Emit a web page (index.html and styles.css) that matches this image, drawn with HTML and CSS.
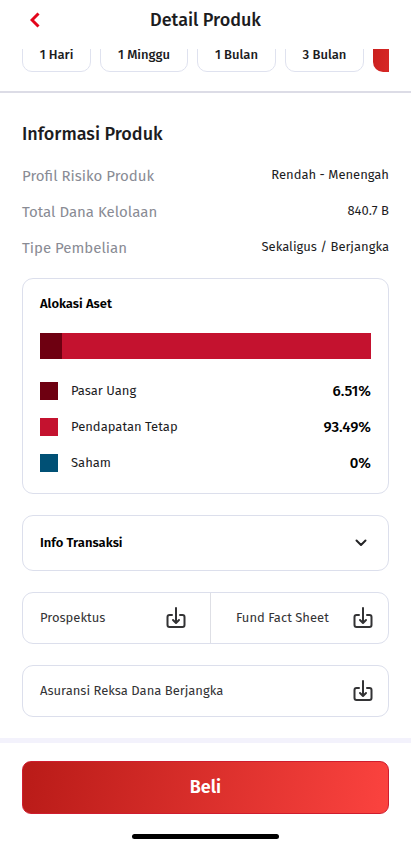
FILE: index.html
```html
<!DOCTYPE html>
<html lang="id">
<head>
<meta charset="utf-8">
<meta name="viewport" content="width=device-width, initial-scale=1">
<title>Detail Produk</title>
<link rel="stylesheet" href="styles.css">
</head>
<body>
<svg class="sprite" aria-hidden="true">
  <symbol id="download" viewBox="0 0 20 22">
    <path d="M6 8H3.500Q1.500 8 1.500 10V18Q1.500 20 3.500 20H16.500Q18.500 20 18.500 18V10Q18.500 8 16.500 8H14M10 1V15.500M7 13L10 16L13 13" fill="none" stroke="currentColor" stroke-width="2" stroke-linecap="round" stroke-linejoin="round"/>
  </symbol>
</svg>
<header class="header">
  <button class="back" type="button" aria-label="Kembali">
    <svg width="10" height="16" viewBox="0 0 10 16"><path d="M8.500 1.500L2 8L8.500 14.500" fill="none" stroke="#e3051b" stroke-width="3"/></svg>
  </button>
  <h1 class="title">Detail Produk</h1>
</header>
<main class="main">
  <div class="periods">
    <button class="chip chip-day" type="button">1 Hari</button>
    <button class="chip chip-week" type="button">1 Minggu</button>
    <button class="chip chip-month" type="button">1 Bulan</button>
    <button class="chip chip-month" type="button">3 Bulan</button>
    <button class="chip chip-active" type="button" aria-label="Periode terpilih"></button>
  </div>
  <section class="info">
    <h2 class="section-title">Informasi Produk</h2>
    <dl class="facts">
      <div class="fact"><dt>Profil Risiko Produk</dt><dd>Rendah - Menengah</dd></div>
      <div class="fact"><dt>Total Dana Kelolaan</dt><dd>840.7 B</dd></div>
      <div class="fact"><dt>Tipe Pembelian</dt><dd>Sekaligus / Berjangka</dd></div>
    </dl>
    <section class="card allocation">
      <h3 class="card-title">Alokasi Aset</h3>
      <div class="bar"><span class="cash" style="width:6.51%"></span><span class="bonds" style="width:93.49%"></span></div>
      <dl class="legend">
        <div class="legend-row"><dt><span class="swatch cash"></span>Pasar Uang</dt><dd>6.51%</dd></div>
        <div class="legend-row"><dt><span class="swatch bonds"></span>Pendapatan Tetap</dt><dd>93.49%</dd></div>
        <div class="legend-row"><dt><span class="swatch stocks"></span>Saham</dt><dd>0%</dd></div>
      </dl>
    </section>
    <button class="card accordion" type="button" aria-expanded="false">Info Transaksi
      <svg width="12" height="8" viewBox="0 0 12 8"><path d="M1.500 1.500L6 6L10.500 1.500" fill="none" stroke="#242426" stroke-width="2" stroke-linecap="round" stroke-linejoin="round"/></svg>
    </button>
    <div class="card documents pair">
      <a class="document" href="#prospektus">Prospektus<svg class="icon"><use href="#download"/></svg></a>
      <a class="document" href="#fund-fact-sheet">Fund Fact Sheet<svg class="icon"><use href="#download"/></svg></a>
    </div>
    <div class="card documents">
      <a class="document" href="#asuransi">Asuransi Reksa Dana Berjangka<svg class="icon"><use href="#download"/></svg></a>
    </div>
  </section>
</main>
<footer class="footer">
  <button class="buy" type="button">Beli</button>
  <div class="home-indicator"></div>
</footer>
</body>
</html>
```
FILE: styles.css
```css
* { box-sizing: border-box; }
body {
  margin: 0;
  min-height: 100vh;
  display: flex;
  flex-direction: column;
  background: #fff;
  color: #1c1c1e;
  font: 13px/20px "Fira Sans", "Noto Sans", sans-serif;
}
h1, h2, h3, dl, dd { margin: 0; }
button { font: inherit; color: inherit; cursor: pointer; }
.sprite { position: absolute; width: 0; height: 0; }
.header {
  display: grid;
  grid-template-columns: 26px 1fr 26px;
  align-items: center;
  padding: 8px 22px 17px;
}
.back { display: flex; justify-content: center; padding: 4px 0; border: 0; background: none; }
.title { font-size: 18px; line-height: 24px; font-weight: 500; text-align: center; }
.main { flex: 1; }
.periods {
  display: flex;
  align-items: flex-end;
  gap: 9px;
  max-height: 23px;
  margin: 0 22px;
  overflow: hidden;
}
.chip {
  flex: none;
  height: 34px;
  padding: 0;
  border: 1px solid #dfe2ef;
  border-radius: 10px;
  background: #fff;
  font-weight: 500;
}
.chip-day { width: 69px; }
.chip-week { width: 88px; }
.chip-month { width: 79px; }
.chip-active { width: 69px; border: 0; background: linear-gradient(100deg, #c91f1d, #f93f3c); }
.info {
  margin-top: 19px;
  padding: 29px 22px 21px;
  border-top: 2px solid #dcdce6;
}
.section-title { font-size: 18px; line-height: 24px; font-weight: 500; }
.facts { display: grid; gap: 12px; margin: 18px 0; }
.fact { display: flex; justify-content: space-between; line-height: 24px; }
.fact dt { color: #898b94; font-size: 15px; }
.fact dd { line-height: 22px; }
.card {
  width: 100%;
  border: 1px solid #dcdfec;
  border-radius: 11px;
  background: #fff;
}
.card + .card { margin-top: 21px; }
.allocation { padding: 15px 17px 20px; }
.card-title { color: #000; font-size: 13px; line-height: 20px; font-weight: 600; }
.bar { display: flex; height: 26px; margin: 19px 0 22px; }
.cash { background: #6e0011; }
.bonds { background: #c4122f; }
.stocks { background: #005075; }
.legend { display: grid; gap: 16px; }
.legend-row { display: flex; justify-content: space-between; align-items: center; }
.legend-row dt { display: flex; align-items: center; gap: 13px; }
.legend-row dd { color: #000; font-size: 15px; font-weight: 500; }
.swatch { width: 18px; height: 18px; }
.accordion {
  display: flex;
  justify-content: space-between;
  align-items: center;
  padding: 17px 21px 17px 17px;
  color: #000;
  font-weight: 600;
}
.documents { display: grid; }
.pair { grid-template-columns: 21fr 20fr; }
.document {
  display: flex;
  justify-content: space-between;
  align-items: center;
  padding: 14px 15px 14px 17px;
  color: #333335;
  text-decoration: none;
}
.document:first-child:not(:last-child) { padding-right: 24px; }
.document + .document { padding-left: 25px; border-left: 1px solid #dedfe5; }
.icon { width: 20px; height: 22px; }
.footer { padding: 18px 22px 8px; border-top: 5px solid #f3f2fc; }
.buy {
  display: block;
  width: 100%;
  padding: 13px;
  border: 1px solid #cf1d2e;
  border-radius: 9px;
  background: linear-gradient(100deg, #b91b18, #fb433f);
  color: #fff;
  font-size: 18px;
  line-height: 25px;
  font-weight: 600;
}
.home-indicator {
  width: 40%;
  height: 5px;
  margin: 20px auto 0;
  border-radius: 3px;
  background: #000;
}
```
